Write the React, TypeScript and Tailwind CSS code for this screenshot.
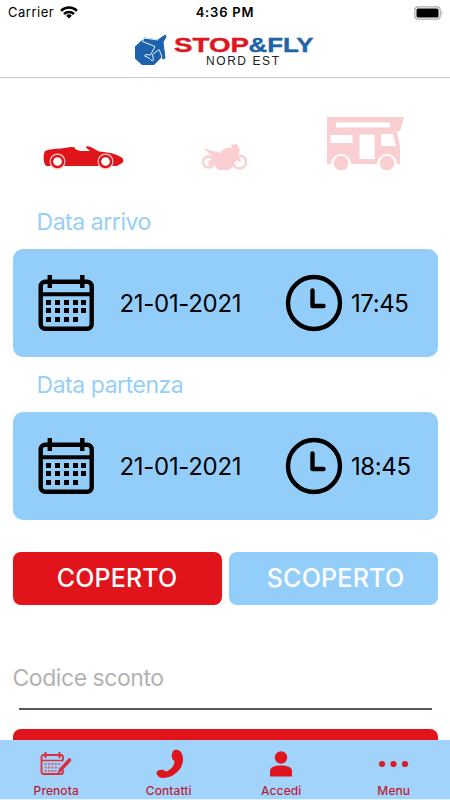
import React, { useState } from 'react';

const DAY_DOTS = [
  [8, 25], [17, 25], [26, 25], [35, 25], [43, 25],
  [8, 33], [17, 33], [26, 33], [35, 33], [43, 33],
  [8, 42], [17, 42], [26, 42], [35, 42],
];

function Logo() {
  return (
    <svg width="184" height="34" viewBox="0 0 184 34">
      {/* Octagon with the plane crossing it */}
      <path d="M8 6h13l6 7v11l-7 7H8L1 24.500V12.500z" fill="#1c62ac" />
      <path
        d="M29 2.500 31.500 1 32 3l-3 5 2 16-2 1-4-10-7 5.500 1 5.500-1.500 1-3-3-4.500-2 1-1.500 5 .5 4.500-7.500L8.500 7.500 10 4l14 2z"
        fill="#1c62ac"
        stroke="#1c62ac"
        strokeLinejoin="round"
      />
      <path
        d="M24 6 10 4 8.500 7.500 21 12.500 16.500 21l-5-.5-1 1.500 4.500 2 3 3 1.500-1-1-5.500 6.500-5 3 7"
        fill="none"
        stroke="#e7f2fb"
        strokeWidth="1"
      />
      <text x="40" y="17.500" textLength="75" lengthAdjust="spacingAndGlyphs" fontFamily="Liberation Sans, sans-serif" fontWeight="700" fontSize="21" fill="#dd1722" stroke="#dd1722" strokeWidth=".4">STOP</text>
      <text x="114.500" y="17.500" textLength="65" lengthAdjust="spacingAndGlyphs" fontFamily="Liberation Sans, sans-serif" fontWeight="700" fontSize="21" fill="#2063a8" stroke="#2063a8" strokeWidth=".4">&amp;FLY</text>
      <text x="72" y="30.500" textLength="73" fontFamily="Liberation Sans, sans-serif" fontSize="12" fill="#222">NORD EST</text>
    </svg>
  );
}

function CarIcon() {
  return (
    <svg width="82" height="26" viewBox="0 0 82 26">
      <path
        d="M2 6C6 4 12 4 18 3.500L28 2l4 .5V4l5 2h10l-4-3.500 1-1.500c5 1 9 4 12 5.500 9 .5 17 2.500 22 5.500 3 2 3 5 1 6l-5 3H3.500C0 19 0 9 2 6z"
        fill="#e0141b"
      />
      <circle cx="14.500" cy="16.500" r="8" fill="#fbd0d2" />
      <circle cx="62.500" cy="16.500" r="8" fill="#fbd0d2" />
      <circle cx="14.500" cy="16.500" r="5.600" fill="#fff" stroke="#e0141b" strokeWidth="2.500" />
      <circle cx="62.500" cy="16.500" r="5.600" fill="#fff" stroke="#e0141b" strokeWidth="2.500" />
    </svg>
  );
}

function MotorbikeIcon() {
  return (
    <svg width="48" height="28" viewBox="0 0 48 28" fill="#f9cfd1">
      <circle cx="7.500" cy="19" r="5.500" fill="none" stroke="#f9cfd1" strokeWidth="2.400" />
      <circle cx="38.500" cy="19" r="6.500" fill="none" stroke="#f9cfd1" strokeWidth="2.400" />
      <path d="M2 5l10 3 7 2c3-5 8-6 12-5l-1-3 6-1 3 6-2 5 1 4-4 3-3 6-4 2H17l-4-6-5 2-1-3 6-4-3-4z" />
      <path d="M34 8l5 11M8 19l9-5" stroke="#f9cfd1" strokeWidth="2.500" />
    </svg>
  );
}

function CamperIcon() {
  return (
    <svg width="78" height="56" viewBox="0 0 78 56">
      <path d="M1 0h77l-4 14h-3l3 16v17H1z" fill="#f9cfd1" />
      <path d="M10 5.500h54v5H10zM4.500 18h22v8h-22zM33.500 17.500h15V42h-15zM55 17h12l3 12H55z" fill="#fff" />
      <path d="M5 47a10 10 0 0 1 20 0zM51 47a10 10 0 0 1 20 0z" fill="#fff" />
      <circle cx="15" cy="46" r="7.300" fill="#f9cfd1" />
      <circle cx="61" cy="46" r="7.300" fill="#f9cfd1" />
    </svg>
  );
}

function CalendarIcon() {
  return (
    <svg width="56" height="56" viewBox="0 0 56 56">
      <rect x="2.700" y="6.700" width="51" height="47" rx="4.500" fill="none" stroke="#000" strokeWidth="4.400" />
      <path d="M2 19.200h52" stroke="#000" strokeWidth="4" />
      <path d="M11.800 0v13M44.300 0v13" stroke="#000" strokeWidth="4.400" />
      {DAY_DOTS.map(([x, y]) => (
        <rect key={`${x}-${y}`} x={x} y={y} width="5" height="5" />
      ))}
    </svg>
  );
}

function ClockIcon() {
  return (
    <svg width="58" height="58" viewBox="0 0 58 58" fill="none" stroke="#000" strokeWidth="4.400">
      <circle cx="29" cy="29" r="26" />
      <path d="M27.500 16.500V32h11" strokeLinecap="round" strokeLinejoin="round" />
    </svg>
  );
}

function DateCard({ label, date, time }: { label: string; date: string; time: string }) {
  return (
    <section className="h-[163px]">
      <h2 className="flex h-[55px] items-center pl-[24px] pt-[2px] text-[23px] tracking-[-0.45px] text-[#96cff9]">{label}</h2>
      <div className="flex h-[108px] items-center rounded-[10px] bg-[#93cefb] text-[24px] text-black">
        <div className="ml-[25px] w-[56px]"><CalendarIcon /></div>
        <span className="ml-[26px] w-[140px] whitespace-nowrap pt-[2px] tracking-[-0.3px]">{date}</span>
        <div className="ml-[25px] w-[58px]"><ClockIcon /></div>
        <span className="ml-[8.500px] whitespace-nowrap pt-[2px] tracking-[-0.4px]">{time}</span>
      </div>
    </section>
  );
}

function BookingIcon() {
  return (
    <svg width="32" height="24" viewBox="0 0 32 24" fill="none" stroke="#d92f40">
      <rect x="1.500" y="3" width="21.500" height="19" rx="2" strokeWidth="1.800" />
      <path d="M2 8.500h21" strokeWidth="1.500" />
      <path d="M5.500 0v6M19.500 0v6" strokeWidth="2" />
      <path d="M4.500 12h17M4.500 15.500h16M4.500 19h12" strokeWidth="2" strokeDasharray="2.200 1.200" opacity=".6" />
      <path d="M27.500 8.500 20.500 17" stroke="#a2d4fb" strokeWidth="6" />
      <path d="M29.500 8 21 17.500" strokeWidth="3.600" strokeLinecap="round" />
      <path d="M19.500 16.500 17 22l5-3z" fill="#d92f40" stroke="none" />
    </svg>
  );
}

function PhoneIcon() {
  return (
    <svg width="28" height="30" viewBox="0 0 28 30" fill="#e0141e">
      <path d="M18 2c2-2 5-1.500 7 0 4 4 4 12 0 18-4 5-10 9-17 9-3 0-6-2-6.500-5 0-3 5-4 7-3 2 1 2 2 4 1 4-2 6.500-5 7-9 0-2-2-2-2.500-4-.5-2 0-5.500 1-7z" />
    </svg>
  );
}

function UserIcon() {
  return (
    <svg width="24" height="28" viewBox="0 0 24 28" fill="#e0141e">
      <circle cx="12" cy="7.500" r="6.200" />
      <path d="M1 26.500V21c0-4 5-5.500 11-5.500S23 17 23 21v5.500z" />
    </svg>
  );
}

function DotsIcon() {
  return (
    <svg width="30" height="8" viewBox="0 0 30 8" fill="#d91c2a">
      <circle cx="3" cy="4" r="3.100" />
      <circle cx="14.500" cy="4" r="3.100" />
      <circle cx="26" cy="4" r="3.100" />
    </svg>
  );
}

const TABS = [
  { label: 'Prenota', icon: <BookingIcon /> },
  { label: 'Contatti', icon: <PhoneIcon /> },
  { label: 'Accedi', icon: <UserIcon /> },
  { label: 'Menu', icon: <DotsIcon /> },
];

export default function App() {
  const [code, setCode] = useState('');

  return (
    <div className="flex h-[800px] w-[450px] flex-col overflow-hidden bg-white font-['Inter',sans-serif]">
      {/* Status bar */}
      <div className="grid h-[25px] shrink-0 grid-cols-3 items-center pl-2 pr-[6px] text-[13px] text-black">
        <div className="flex items-center gap-[6px]">
          <span className="tracking-[0.5px]">Carrier</span>
          <svg width="18" height="13" viewBox="0 0 18 13" fill="none" stroke="#000" strokeWidth="2.500">
            <path d="M1 4.800a11.500 11.500 0 0 1 16 0M4 8a7.200 7.200 0 0 1 10 0" />
            <path d="M9 12.500 6.200 9.700a4 4 0 0 1 5.600 0z" fill="#000" stroke="none" />
          </svg>
        </div>
        <span className="whitespace-nowrap pr-[2px] text-center font-semibold tracking-[0.8px]">4:36 PM</span>
        <svg width="30" height="14" viewBox="0 0 30 14" className="justify-self-end">
          <rect x=".8" y=".8" width="25.400" height="12.400" rx="3.500" fill="#fff" stroke="#aaa" strokeWidth="1.200" />
          <rect x="2.500" y="2.500" width="22" height="9" rx="1.500" />
          <path d="M27.500 4.500q2 2.500 0 5z" fill="#aaa" />
        </svg>
      </div>

      <header className="flex h-[53px] shrink-0 justify-center border-b border-[#c8c8c8] pl-[2px] pt-[9px]">
        <Logo />
      </header>

      <main className="flex min-h-0 flex-1 flex-col overflow-hidden pl-[12.500px] pr-[12px]">
        {/* Vehicle type */}
        <div className="flex h-[116px] shrink-0">
          <button className="ml-[30px] mt-[67px] h-[26px]"><CarIcon /></button>
          <button className="ml-[76.500px] mt-[65px] h-[28px]"><MotorbikeIcon /></button>
          <button className="ml-[77px] mt-[39px] h-[56px]"><CamperIcon /></button>
        </div>

        <DateCard label="Data arrivo" date="21-01-2021" time="17:45" />
        <DateCard label="Data partenza" date="21-01-2021" time="18:45" />

        <div className="mt-[31.500px] flex h-[53px] shrink-0 gap-[7px] text-[25px] font-medium text-white">
          <button className="w-[209px] rounded-lg bg-[#e1131b] pt-[2px] tracking-[0.15px]">COPERTO</button>
          <button className="w-[209px] rounded-lg bg-[#93cefb] pl-[5px] pt-[2px] tracking-[0.25px]">SCOPERTO</button>
        </div>

        <input
          value={code}
          onChange={(e) => setCode(e.target.value)}
          placeholder="Codice sconto"
          className="mt-[53.500px] h-[40px] shrink-0 text-[23px] tracking-[-0.45px] text-black outline-none placeholder:text-[#b2b2b2]"
        />
        <div className="mx-[6px] mt-[10px] h-[1.500px] shrink-0 bg-[#5c5858]" />
        <button className="mt-[19px] h-[53px] shrink-0 rounded-lg bg-[#e1131b]" aria-label="Prenota" />
      </main>

      <nav className="grid h-[60px] shrink-0 grid-cols-4 border-b border-[#e0f0fc] bg-[#a2d4fb] text-[12px] font-medium text-[#ba1c3b]">
        {TABS.map(({ label, icon }) => (
          <button key={label} className="flex flex-col items-center">
            <span className="flex h-[43px] items-center pt-[4px]">{icon}</span>
            <span className="leading-[16px] tracking-[0.1px]">{label}</span>
          </button>
        ))}
      </nav>
    </div>
  );
}
